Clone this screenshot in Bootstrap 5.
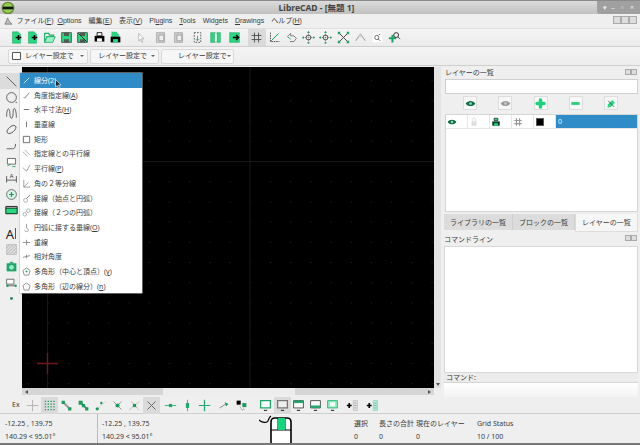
<!DOCTYPE html>
<html lang="ja">
<head>
<meta charset="UTF-8">
<title>LibreCAD</title>
<link href="https://cdn.jsdelivr.net/npm/bootstrap@5.3.0/dist/css/bootstrap.min.css" rel="stylesheet">
<style>
html, body { height: 445px; overflow: hidden; }
body { font-family: "Noto Sans", "Noto Sans CJK JP", sans-serif; font-size: 7px; line-height: 10px; color: #3a3a3a; background: #efefef; }
svg { display: block; }
.sprite { position: absolute; }
.app { height: 445px; position: relative; border-bottom: 2px solid #777; }

.titlebar { height: 14px; flex: none; background: linear-gradient(#dcdcdc, #c0c0c0); border-top: 1px solid #8a8a8a; position: relative; }
.title-text { font-weight: 700; font-size: 8.5px; color: #444; margin-right: 7px; }
.app-icon { position: absolute; left: 1px; top: 0; }
.win-btns { position: absolute; right: 0; top: 0; width: 43px; height: 13px; background: #a0a0a0; border-bottom-left-radius: 3px; color: #eee; font-size: 7px; }

.menubar { height: 14px; flex: none; padding-left: 3.5px; background: #efefef; position: relative; font-family: "Liberation Sans", "Noto Sans CJK JP", sans-serif; }
.menubar span { margin-right: 7px; font-size: 7px; white-space: nowrap; }
.menubar span.menu-first { margin-right: 4px; }
.menubar u { text-decoration: underline; }
.mdi-btns { position: absolute; right: 3px; top: 2px; }
.mini { width: 8px; height: 8px; border: 1px solid #aaa; background: #ddd; }

.toolbar { flex: none; height: 19px; padding-left: 8px; background: linear-gradient(#f4f4f4, #ececec); border-top: 1px solid #e0e0e0; border-bottom: 1px solid #cfcfcf; }
.slot { flex: none; height: 17px; }
.w1 { width: 16.6px; }
.w2 { width: 18.6px; }
.w3 { width: 17.25px; }
.sep { flex: none; width: 8px; }
.sep-s { flex: none; width: 4.6px; }
.pressed { background: #dadada; border-radius: 1px; }
.combo-row { height: 19px; padding-left: 8px; gap: 2px; border-top: 0; }
.combo { height: 15px; background: #f6f6f6; border: 1px solid #d9d9d9; border-radius: 2px; font-size: 7px; white-space: nowrap; padding: 0 3px; }
.combo-1 { width: 80px; }
.combo-2 { width: 69px; }
.combo-3 { width: 73px; }
.caret-d { margin-left: auto; width: 0; height: 0; border: 2px solid transparent; border-top: 2px solid #666; margin-top: 2px; }

.workspace { flex: 1 1 auto; min-height: 0; padding-top: 1px; }
.left-tools { flex: none; width: 22px; padding-top: 6px; background: #efefef; }
.tool { height: 16.2px; flex: none; }
.tool.on { background: #dcdcdc; }
.tool-gap { height: 7px; flex: none; }
.tool-text { font-size: 13px; color: #222; }
.text-bar { width: 1px; height: 11px; background: #555; margin-left: 1px; }

.center { flex: none; width: 421px; padding-right: 2px; }
.canvas-row { flex: 1 1 auto; min-height: 0; }
.canvas { flex: 1 1 auto; background: #000; }
.vscroll { flex: none; width: 7px; background: #e4e4e4; position: relative; }
.arrow-d { position: absolute; left: 2px; bottom: 2px; width: 0; height: 0; border: 2px solid transparent; border-top: 3px solid #555; border-bottom: 0; }
.hscroll { flex: none; height: 7px; background: #d6d6d6; padding-left: 141px; margin: 0 7px 2px 0; position: relative; }
.arrow-l, .arrow-r { position: absolute; top: 2px; width: 0; height: 0; border: 2px solid transparent; }
.arrow-l { left: 3px; border-right: 3px solid #555; border-left: 0; }
.arrow-r { right: 3px; border-left: 3px solid #555; border-right: 0; }
.thumb { width: 132px; height: 100%; background: #ededed; }

.dock { flex: none; width: 197px; padding-right: 2px; }
.dock-title { height: 12px; flex: none; padding: 1px 0 0 2px; font-size: 7px; position: relative; }
.dock-btns { position: absolute; right: 1px; top: 2px; }
.dock-btns .mini { width: 6px; height: 6px; }
.layer-filter { height: 15px; flex: none; background: #fff; border: 1px solid #cfcfcf; margin-left: 2px; }
.layer-actions { height: 20px; flex: none; margin-left: 2px; padding: 2px 20px 0 18px; }
.act { width: 14px; height: 14px; background: #f7f7f7; border: 1px solid #ddd; }
.layer-table { height: 98px; flex: none; background: #fff; border: 1px solid #d4d4d4; margin-left: 2px; }
.layer-row { height: 14px; border-bottom: 1px solid #e6e6e6; }
.cell { width: 22px; border-right: 1px solid #e6e6e6; flex: none; padding-left: 1px; }
.cell-name { flex: 1 1 auto; background: #308cc6; color: #e8f2fa; padding-left: 2px; line-height: 13px; }
.swatch { width: 8px; height: 8px; background: #000; border: 1px solid #555; margin-left: 1px; }
.dock-tabs { height: 19px; flex: none; margin: 2px 27px 0 1px; }
.dock-tab { background: #dcdcdc; padding: 4px 6px 0; border-right: 1px solid #cfcfcf; white-space: nowrap; flex: none; height: 16px; }
.dock-tab.active { background: #f6f6f6; height: 18px; border: 1px solid #ddd; border-top: 0; }
.cmd-title { height: 13px; flex: none; padding: 2px 0 0 1px; position: relative; }
.cmd-output { flex: 1 1 auto; background: #fff; border: 1px solid #d8d8d8; margin-left: 1px; }
.cmd-label { height: 10px; flex: none; padding-left: 3px; font-size: 7px; background: #ececec; line-height: 10px; border-bottom: 1px solid #d4d4d4; }
.cmd-input { height: 14px; flex: none; background: linear-gradient(#fff, #f3f3f3); margin-left: 1px; }

.bottom-tools { height: 17px; flex: none; padding-left: 12px; border-bottom: 1px solid #cfcfcf; background: #efefef; font-size: 7px; }
.ex { width: 11.5px; flex: none; }
.b1 { width: 17px; }
.b2 { width: 16.6px; }
.bsep-2 { width: 2px; flex: none; }
.bsep-3 { width: 3px; flex: none; }
.bsep-4 { width: 4px; flex: none; }
.bsep-8 { width: 8px; flex: none; }

.status { height: 29px; flex: none; background: #efefef; position: relative; }
.st-col { flex: none; padding-top: 3px; white-space: nowrap; }
.st-col div { height: 13px; line-height: 13px; }
.st-a { width: 98px; padding-left: 5px; border-right: 1px solid #bbb; }
.st-b { width: 161px; padding-left: 4px; }
.st-mouse { width: 95px; position: relative; }
.st-c { width: 25px; }
.st-d { width: 37px; }
.st-e { width: 61px; }
.menu-pop { position: absolute; left: 20px; top: 73px; width: 122px; background: #fff; z-index: 5; box-shadow: 0 0 0 .5px #bbb, 1px 1px 1px rgba(0,0,0,.3); }
.pop-item { height: 14.7px; padding-left: 14px; line-height: 15px; white-space: nowrap; position: relative; }
.pop-item svg { position: absolute; left: 2px; top: 3px; }
.pop-item.on { background: #308cc6; color: #fff; }
.cursor { position: absolute; left: 55px; top: 79px; z-index: 6; }
</style>
</head>
<body>

<svg class="sprite" width="0" height="0">
  <defs>
    <symbol id="new" viewBox="0 0 16 16"><path d="M3 1h7l3 3v11H3z" fill="#27d880" stroke="#1a9c5c" stroke-width=".6"/><path d="M7 8h7M10.5 5v6" stroke="#000" stroke-width="2"/></symbol>
    <symbol id="open" viewBox="0 0 16 16"><path d="M2 3h5l1 2h5v2H5l-3 7z" fill="none" stroke="#18b066" stroke-width="1.4"/><path d="M5 7h10l-3 7H2z" fill="#9eeec6" stroke="#18b066"/></symbol>
    <symbol id="save" viewBox="0 0 16 16"><path d="M2 2h12v12H2z" fill="#27d880" stroke="#444"/><path d="M5 2h6v4H5zM5 10h6v4H5z" fill="#555"/></symbol>
    <symbol id="saveas" viewBox="0 0 16 16"><path d="M2 2h12v12H2z" fill="#27d880" stroke="#444"/><path d="M5 2h6v4H5zM5 10h6v4H5z" fill="#555"/><path d="M3 3l10 10" stroke="#222" stroke-width="1.2"/></symbol>
    <symbol id="print" viewBox="0 0 16 16"><path d="M5 2h6v4H5z" fill="#fff" stroke="#000"/><path d="M2 6h12v7H2z" fill="#000"/><path d="M5 9h6v4H5z" fill="#fff"/></symbol>
    <symbol id="preview" viewBox="0 0 16 16"><path d="M3 1h6l3 3v4H3z" fill="#27d880"/><path d="M2 7h12v7H2z" fill="#000"/><path d="M5 10h6v4H5z" fill="#27d880"/></symbol>
    <symbol id="pointer" viewBox="0 0 16 16"><path d="M5 2l7 7H8.500l2 4-1.500.7-2-4L5 12z" fill="#fff" stroke="#999" stroke-width=".8"/></symbol>
    <symbol id="copy" viewBox="0 0 16 16"><path d="M3 2h10v12H3z" fill="#ccc" stroke="#aaa"/><path d="M6 5h6v7H6z" fill="#eee" stroke="#999"/></symbol>
    <symbol id="dash" viewBox="0 0 16 16"><path d="M4 2h8v12H4z" fill="none" stroke="#444" stroke-dasharray="2 1.500"/><path d="M8 6v6M6 10l2 2 2-2" stroke="#1a9c5c" fill="none"/></symbol>
    <symbol id="split" viewBox="0 0 16 16"><path d="M2 2h5v12H2z" fill="#27d880" stroke="#1a9c5c" stroke-width=".6"/><path d="M10 2h4v12h-4z" fill="#27d880" stroke="#1a9c5c" stroke-width=".6"/><path d="M7 2l3 1v10l-3 1z" fill="#fff" stroke="#1a9c5c" stroke-width=".6"/></symbol>
    <symbol id="paste" viewBox="0 0 16 16"><path d="M2 2h12v12H2z" fill="#27d880" stroke="#1a9c5c" stroke-width=".6"/><path d="M6 8h7M10 5l3 3-3 3" stroke="#000" stroke-width="1.800" fill="none"/></symbol>
    <symbol id="grid" viewBox="0 0 16 16"><path d="M5.500 2v12M10.500 2v12M2 5.500h12M2 10.500h12" stroke="#555" stroke-width="1.200"/></symbol>
    <symbol id="draft" viewBox="0 0 16 16"><path d="M3 2v11h11" stroke="#333" stroke-dasharray="2 1" fill="none"/><path d="M4 12l9-9" stroke="#1a9c5c" stroke-width="1.200"/></symbol>
    <symbol id="zoomback" viewBox="0 0 16 16"><path d="M3 7l4-4v3h4l3 3-3 4H6" stroke="#666" fill="none"/><path d="M3 7l4 3" stroke="#1a9c5c"/></symbol>
    <symbol id="pan" viewBox="0 0 16 16"><path d="M8 1v14M1 8h14" stroke="#777" stroke-dasharray="2 1"/><circle cx="8" cy="8" r="3" fill="none" stroke="#333"/><path d="M6 2h4L8 0zM6 14h4l-2 2zM2 6v4L0 8zM14 6v4l2-2z" fill="#1a9c5c"/></symbol>
    <symbol id="zoomext" viewBox="0 0 16 16"><path d="M3 3l10 10M13 3L3 13" stroke="#444" stroke-width="1.200"/><path d="M1 1h3v3H1zM12 1h3v3h-3zM1 12h3v3H1zM12 12h3v3h-3z" fill="#2a9e6a"/></symbol>
    <symbol id="zoomgray" viewBox="0 0 16 16"><path d="M2 12L8 4l6 8" fill="none" stroke="#aaa" stroke-width="1.400"/><circle cx="8" cy="5" r="2" fill="#ccc"/></symbol>
    <symbol id="zoomwin" viewBox="0 0 16 16"><path d="M1 1h14v14H1z" fill="#fff"/><circle cx="7" cy="8" r="3" fill="none" stroke="#555" stroke-width="1.200"/><path d="M9 10l3 3M10 4l2-1" stroke="#333"/></symbol>
    <symbol id="zoomplus" viewBox="0 0 16 16"><path d="M1 9h9M5.500 5v9" stroke="#1da86b" stroke-width="2.600"/><circle cx="10" cy="5" r="3" fill="none" stroke="#333" stroke-width="1.200"/><path d="M12 7l3 3" stroke="#333"/></symbol>

    <symbol id="t-line" viewBox="0 0 16 16"><path d="M2 2l12 12" stroke="#555" stroke-width="1.100"/></symbol>
    <symbol id="t-circle" viewBox="0 0 16 16"><circle cx="8" cy="8" r="6" fill="none" stroke="#555" stroke-width="1.100"/><path d="M13 14h2" stroke="#555"/></symbol>
    <symbol id="t-spline" viewBox="0 0 16 16"><path d="M2 12c0-12 4-12 4-4s4 8 4-1 4-6 4 6" fill="none" stroke="#555" stroke-width="1.100"/></symbol>
    <symbol id="t-ellipse" viewBox="0 0 16 16"><ellipse cx="8" cy="8" rx="6.500" ry="3.500" transform="rotate(-40 8 8)" fill="none" stroke="#555" stroke-width="1.100"/></symbol>
    <symbol id="t-poly" viewBox="0 0 16 16"><path d="M2 12h7c3 0 4-2 4-6" fill="none" stroke="#555" stroke-width="1.100"/></symbol>
    <symbol id="t-select" viewBox="0 0 16 16"><path d="M3 3h10v7H3z" fill="#fff" stroke="#555"/><path d="M3 12l4-2M13 13h-4" stroke="#1a9c5c"/></symbol>
    <symbol id="t-dim" viewBox="0 0 16 16"><path d="M2 5v8M14 5v8M2 10h12" stroke="#444"/><text x="8" y="7" font-size="7" text-anchor="middle" fill="#333">A</text></symbol>
    <symbol id="t-mod" viewBox="0 0 16 16"><circle cx="8" cy="8" r="6" fill="#d9f7e8" stroke="#555"/><path d="M5 8h6M8 5v6" stroke="#1a9c5c" stroke-width="1.500"/></symbol>
    <symbol id="t-measure" viewBox="0 0 16 16"><path d="M1 5h14v7H1z" fill="#27d880" stroke="#000"/><path d="M1 3v2M15 3v2M1 3h14" stroke="#000"/></symbol>
    <symbol id="t-hatch" viewBox="0 0 16 16"><path d="M2 2h12v12H2z" fill="#ddd" stroke="#bbb"/><path d="M2 6l4-4M2 10l8-8M2 14L14 2M6 14l8-8M10 14l4-4" stroke="#aaa" stroke-width=".8"/></symbol>
    <symbol id="t-image" viewBox="0 0 16 16"><path d="M2 4h12v10H2z" fill="#1fa56a"/><path d="M5 4l2-2h2l2 2" fill="#1fa56a"/><circle cx="8" cy="9" r="3" fill="#8ff0c0"/></symbol>
    <symbol id="t-block" viewBox="0 0 16 16"><path d="M2 4h9v6H2z" fill="#fff" stroke="#555"/><path d="M2 12h11" stroke="#555"/><circle cx="3" cy="12" r="1.500" fill="#1a9c5c"/><circle cx="13" cy="12" r="1.500" fill="#1a9c5c"/></symbol>
    <symbol id="t-dot" viewBox="0 0 16 16"><circle cx="8" cy="8" r="1.800" fill="#2a8a5e"/></symbol>

    <symbol id="m-line" viewBox="0 0 10 10"><path d="M2 8l6-6" stroke="#e8f2fa"/></symbol>
    <symbol id="m-angle" viewBox="0 0 10 10"><path d="M2 7l1 1 5-6" fill="none" stroke="#777"/></symbol>
    <symbol id="m-h" viewBox="0 0 10 10"><path d="M2 5h6" stroke="#666"/></symbol>
    <symbol id="m-v" viewBox="0 0 10 10"><path d="M5 2v6" stroke="#666"/></symbol>
    <symbol id="m-rect" viewBox="0 0 10 10"><path d="M1.500 1.500h7v7h-7z" fill="none" stroke="#666"/></symbol>
    <symbol id="m-par" viewBox="0 0 10 10"><path d="M1 3l5 5M3 1l6 6" stroke="#aaa"/></symbol>
    <symbol id="m-par2" viewBox="0 0 10 10"><path d="M1 4l4 4 4-7" fill="none" stroke="#999"/></symbol>
    <symbol id="m-bis" viewBox="0 0 10 10"><path d="M2 1v8h7M2 9l5-5" fill="none" stroke="#999"/></symbol>
    <symbol id="m-tan" viewBox="0 0 10 10"><circle cx="4" cy="7" r="2.200" fill="none" stroke="#aaa"/><path d="M5 5l4-4" stroke="#777"/></symbol>
    <symbol id="m-tan2" viewBox="0 0 10 10"><circle cx="3" cy="7" r="2" fill="none" stroke="#aaa"/><circle cx="7" cy="3" r="2" fill="none" stroke="#aaa"/></symbol>
    <symbol id="m-ortho" viewBox="0 0 10 10"><path d="M3 8a2 2 0 1 0 3-2M5 1v5" fill="none" stroke="#999"/></symbol>
    <symbol id="m-cross" viewBox="0 0 10 10"><path d="M1 5h8M5 2v6" stroke="#888"/></symbol>
    <symbol id="m-rel" viewBox="0 0 10 10"><path d="M1 6l8-2M5 3v4" stroke="#888"/></symbol>
    <symbol id="m-polyc" viewBox="0 0 10 10"><path d="M5 1l4 3-1.500 5h-5L1 4z" fill="none" stroke="#888"/><circle cx="5" cy="5" r="1" fill="#1a9c5c"/></symbol>
    <symbol id="m-polys" viewBox="0 0 10 10"><path d="M5 1l4 3-1.500 5h-5L1 4z" fill="none" stroke="#888"/></symbol>

    <symbol id="eye" viewBox="0 0 16 16"><path d="M1 8c3-5 11-5 14 0-3 5-11 5-14 0z" fill="#0d6e47"/><circle cx="8" cy="8" r="2" fill="#89dcb4"/></symbol>
    <symbol id="eye-g" viewBox="0 0 16 16"><path d="M1 8c3-5 11-5 14 0-3 5-11 5-14 0z" fill="#999"/><circle cx="8" cy="8" r="2" fill="#ccc"/></symbol>
    <symbol id="plus" viewBox="0 0 16 16"><path d="M8 3v10M3 8h10" stroke="#18d37a" stroke-width="5" stroke-linecap="round"/></symbol>
    <symbol id="minus" viewBox="0 0 16 16"><path d="M2 8h12" stroke="#18d37a" stroke-width="4"/></symbol>
    <symbol id="edit" viewBox="0 0 16 16"><path d="M2 14l1-5 6-6 4 4-6 6z" fill="#27d880"/><path d="M3 4l9 9" stroke="#333"/></symbol>
    <symbol id="lock-g" viewBox="0 0 16 16"><path d="M4 7h8v7H4z" fill="#ddd"/><path d="M5.500 7V4a2.500 2.500 0 0 1 5 0v3" fill="none" stroke="#ddd" stroke-width="1.500"/></symbol>
    <symbol id="printer-g" viewBox="0 0 16 16"><path d="M5 2h6v4H5z" fill="#27d880" stroke="#000"/><path d="M2 7h12v7H2z" fill="#0b3d28"/><path d="M5 10h6v4H5z" fill="#27d880"/></symbol>
    <symbol id="hash" viewBox="0 0 16 16"><path d="M5.500 2v12M10.500 2v12M2 5.500h12M2 10.500h12" stroke="#999" stroke-width="1.800"/></symbol>

    <symbol id="s-free" viewBox="0 0 16 16"><path d="M8 1v14M1 8h14" stroke="#aaa"/></symbol>
    <symbol id="s-grid" viewBox="0 0 16 16"><path d="M3 2v12M6.500 2v12M10 2v12M13.500 2v12" stroke="#1a9c5c" stroke-width="1.600" stroke-dasharray="1.600 1.800"/></symbol>
    <symbol id="s-a" viewBox="0 0 16 16"><path d="M3 3l10 10" stroke="#999" stroke-width="2.500"/><path d="M2 2h4v4H2zM10 10h4v4h-4z" fill="#1a9c5c"/></symbol>
    <symbol id="s-b" viewBox="0 0 16 16"><path d="M3 3l10 10" stroke="#777" stroke-width="2"/><path d="M2 2h5v5H2zM6 6h4v4H6zM10 10h4v4h-4z" fill="#1a9c5c"/></symbol>
    <symbol id="s-c" viewBox="0 0 16 16"><path d="M3 14L14 3" stroke="#bbb" stroke-dasharray="2 1.500"/><circle cx="4" cy="12" r="2" fill="#1a9c5c"/><circle cx="9" cy="5" r="1.500" fill="#1a9c5c"/></symbol>
    <symbol id="s-d" viewBox="0 0 16 16"><path d="M3 3l10 10M13 3L6 10" stroke="#888"/><circle cx="8" cy="8" r="2.500" fill="#1a9c5c"/></symbol>
    <symbol id="s-e" viewBox="0 0 16 16"><path d="M2 13L14 3M4 3l9 10" stroke="#999" stroke-dasharray="2 1"/><path d="M6 6h4v4H6z" fill="#1a9c5c"/></symbol>
    <symbol id="s-x" viewBox="0 0 16 16"><path d="M3 3l10 10M13 3L3 13" stroke="#666" stroke-width="1.200"/></symbol>
    <symbol id="r-h" viewBox="0 0 16 16"><path d="M1 8h14" stroke="#1da86b"/><path d="M6 6h4v4H6z" fill="#1da86b"/></symbol>
    <symbol id="r-v" viewBox="0 0 16 16"><path d="M8 1v14" stroke="#1da86b"/><path d="M6 5h4v6H6z" fill="#1da86b"/></symbol>
    <symbol id="r-p" viewBox="0 0 16 16"><path d="M8 1v14M1 8h14" stroke="#1da86b" stroke-width="1.500"/></symbol>
    <symbol id="rel" viewBox="0 0 16 16"><path d="M2 11l8-5" stroke="#888" stroke-width="1.200"/><path d="M8 4l5 2-3 3z" fill="#1a9c5c"/></symbol>
    <symbol id="relz" viewBox="0 0 16 16"><path d="M2 2h5v5H2z" fill="#000"/><path d="M9 5h5v5H9z" fill="#1a9c5c"/><path d="M6 9l3 5 1-2 2 1" fill="#fff" stroke="#666" stroke-width=".6"/></symbol>
    <symbol id="mon" viewBox="0 0 16 16"><path d="M2 2h12v9H2z" fill="#fff" stroke="#1da86b" stroke-width="1.600"/><path d="M6 14h4" stroke="#333" stroke-width="1.400"/></symbol>
    <symbol id="mon-g" viewBox="0 0 16 16"><path d="M2 2h12v9H2z" fill="#eee" stroke="#777" stroke-width="1.600"/><path d="M6 14h4" stroke="#333" stroke-width="1.400"/></symbol>
    <symbol id="mon-t" viewBox="0 0 16 16"><path d="M2 2h12v9H2z" fill="#fff" stroke="#333"/><path d="M2 2h12v3H2z" fill="#1da86b"/><path d="M6 14h4" stroke="#333" stroke-width="1.400"/></symbol>
    <symbol id="mon-b" viewBox="0 0 16 16"><path d="M2 2h12v9H2z" fill="#fff" stroke="#333"/><path d="M2 8h12v3H2z" fill="#1da86b"/><path d="M6 14h4" stroke="#333" stroke-width="1.400"/></symbol>
    <symbol id="mon-c" viewBox="0 0 16 16"><path d="M2 2h12v9H2z" fill="#8ff0c0" stroke="#1da86b"/><path d="M5 4h6v5H5z" fill="#fff"/><path d="M6 14h4" stroke="#333" stroke-width="1.400"/></symbol>
    <symbol id="layer-a" viewBox="0 0 16 16"><path d="M1 8h6M4 5v6" stroke="#000" stroke-width="2"/><path d="M9 2h5v12H9z" fill="#e8e8e8" stroke="#bbb"/><path d="M10 5h3M10 8h3M10 11h3" stroke="#999"/></symbol>
    <symbol id="layer-b" viewBox="0 0 16 16"><path d="M1 8h6M4 5v6" stroke="#000" stroke-width="2"/><path d="M9 2h5v12H9z" fill="#bff3d8" stroke="#8cc"/><path d="M10 5h3M10 8h3M10 11h3" stroke="#4a9"/></symbol>
  </defs>
</svg>

<div class="app d-flex flex-column">

  <header class="titlebar d-flex align-items-center justify-content-center">
    <svg class="app-icon" width="14" height="14" viewBox="0 0 16 16"><circle cx="8" cy="8" r="6.500" fill="#8fd14f" stroke="#6d7f3a" stroke-width="1.500"/><path d="M2 8h12" stroke="#111" stroke-width="3"/></svg>
    <span class="title-text">LibreCAD - [無題 1]</span>
    <div class="win-btns d-flex align-items-center justify-content-around px-1"><span>▾</span><span>–</span><span>▫</span><span>×</span></div>
  </header>

  <nav class="menubar d-flex align-items-center">
    <svg width="9" height="9" viewBox="0 0 10 10" class="me-1"><path d="M1 8l3-7 2 4 3 3z" fill="#bbb" stroke="#555" stroke-width=".6"/></svg>
    <span class="menu-first">ファイル(<u>F</u>)</span><span><u>O</u>ptions</span><span>編集(<u>E</u>)</span><span>表示(<u>V</u>)</span><span>Pl<u>u</u>gins</span><span><u>T</u>ools</span><span>Widgets</span><span><u>D</u>rawings</span><span>ヘルプ(<u>H</u>)</span>
    <div class="mdi-btns d-flex gap-0"><div class="mini"></div><div class="mini"></div><div class="mini"></div></div>
  </nav>

  <div class="toolbar d-flex align-items-center">
    <div class="slot w1 d-flex align-items-center justify-content-center"><svg width="13" height="13"><use href="#new"/></svg></div>
    <div class="slot w1 d-flex align-items-center justify-content-center"><svg width="13" height="13"><use href="#new"/></svg></div>
    <div class="slot w1 d-flex align-items-center justify-content-center"><svg width="13" height="13"><use href="#open"/></svg></div>
    <div class="slot w1 d-flex align-items-center justify-content-center"><svg width="13" height="13"><use href="#save"/></svg></div>
    <div class="slot w1 d-flex align-items-center justify-content-center"><svg width="13" height="13"><use href="#saveas"/></svg></div>
    <div class="slot w1 d-flex align-items-center justify-content-center"><svg width="13" height="13"><use href="#print"/></svg></div>
    <div class="slot w1 d-flex align-items-center justify-content-center"><svg width="13" height="13"><use href="#preview"/></svg></div>
    <div class="sep"></div>
    <div class="slot w2 d-flex align-items-center justify-content-center"><svg width="12" height="12"><use href="#pointer"/></svg></div>
    <div class="slot w2 d-flex align-items-center justify-content-center"><svg width="13" height="13"><use href="#copy"/></svg></div>
    <div class="slot w2 d-flex align-items-center justify-content-center"><svg width="13" height="13"><use href="#copy"/></svg></div>
    <div class="slot w2 d-flex align-items-center justify-content-center"><svg width="13" height="13"><use href="#dash"/></svg></div>
    <div class="slot w2 d-flex align-items-center justify-content-center"><svg width="13" height="13"><use href="#split"/></svg></div>
    <div class="slot w2 d-flex align-items-center justify-content-center"><svg width="13" height="13"><use href="#paste"/></svg></div>
    <div class="sep-s"></div>
    <div class="slot w3 pressed d-flex align-items-center justify-content-center"><svg width="13" height="13"><use href="#grid"/></svg></div>
    <div class="slot w3 d-flex align-items-center justify-content-center"><svg width="13" height="13"><use href="#draft"/></svg></div>
    <div class="slot w3 d-flex align-items-center justify-content-center"><svg width="13" height="13"><use href="#zoomback"/></svg></div>
    <div class="slot w3 d-flex align-items-center justify-content-center"><svg width="13" height="13"><use href="#pan"/></svg></div>
    <div class="slot w3 d-flex align-items-center justify-content-center"><svg width="13" height="13"><use href="#pan"/></svg></div>
    <div class="slot w3 d-flex align-items-center justify-content-center"><svg width="13" height="13"><use href="#zoomext"/></svg></div>
    <div class="slot w3 d-flex align-items-center justify-content-center"><svg width="13" height="13"><use href="#zoomgray"/></svg></div>
    <div class="slot w3 d-flex align-items-center justify-content-center"><svg width="11" height="11"><use href="#zoomwin"/></svg></div>
    <div class="slot w3 d-flex align-items-center justify-content-center"><svg width="13" height="13"><use href="#zoomplus"/></svg></div>
  </div>

  <div class="toolbar combo-row d-flex align-items-center">
    <div class="combo combo-1 d-flex align-items-center gap-1"><svg width="9" height="8" viewBox="0 0 9 8"><path d="M.5.5h8v7h-8z" fill="#fff" stroke="#555"/></svg><span>レイヤー設定で</span><i class="caret-d"></i></div>
    <div class="combo combo-2 d-flex align-items-center gap-1"><svg width="8" height="8" viewBox="0 0 8 8"><path d="M0 4h8" stroke="#888"/></svg><span>レイヤー設定で</span><i class="caret-d"></i></div>
    <div class="combo combo-3 d-flex align-items-center ps-3"><span>レイヤー設定で</span><i class="caret-d"></i></div>
  </div>

  <div class="workspace d-flex">
    <aside class="left-tools d-flex flex-column align-items-center">
      <div class="tool on w-100 d-flex align-items-center justify-content-center"><svg width="13" height="13"><use href="#t-line"/></svg></div>
      <div class="tool d-flex align-items-center"><svg width="13" height="13"><use href="#t-circle"/></svg></div>
      <div class="tool d-flex align-items-center"><svg width="13" height="13"><use href="#t-spline"/></svg></div>
      <div class="tool d-flex align-items-center"><svg width="13" height="13"><use href="#t-ellipse"/></svg></div>
      <div class="tool d-flex align-items-center"><svg width="13" height="13"><use href="#t-poly"/></svg></div>
      <div class="tool d-flex align-items-center"><svg width="13" height="13"><use href="#t-select"/></svg></div>
      <div class="tool d-flex align-items-center"><svg width="13" height="13"><use href="#t-dim"/></svg></div>
      <div class="tool d-flex align-items-center"><svg width="13" height="13"><use href="#t-mod"/></svg></div>
      <div class="tool d-flex align-items-center"><svg width="13" height="13"><use href="#t-measure"/></svg></div>
      <div class="tool-gap"></div>
      <div class="tool tool-text d-flex align-items-center">A<span class="text-bar"></span></div>
      <div class="tool d-flex align-items-center"><svg width="13" height="13"><use href="#t-hatch"/></svg></div>
      <div class="tool d-flex align-items-center"><svg width="13" height="13"><use href="#t-image"/></svg></div>
      <div class="tool d-flex align-items-center"><svg width="13" height="13"><use href="#t-block"/></svg></div>
      <div class="tool d-flex align-items-center"><svg width="13" height="13"><use href="#t-dot"/></svg></div>
    </aside>

    <div class="center d-flex flex-column">
      <div class="canvas-row d-flex">
        <div class="canvas">
          <svg width="100%" height="100%">
            <defs>
              <pattern id="dots" x="5.600" y="13.200" width="20.200" height="20.200" patternUnits="userSpaceOnUse"><rect x="0" y="0" width="1" height="1" fill="#282828"/></pattern>
            </defs>
            <rect width="100%" height="100%" fill="url(#dots)"/>
            <path d="M25.500 0v322M228 0v322M0 94.500h412" stroke="#181818"/>
            <path d="M15 296.500h21M25.500 286v21" stroke="#6e1a1a" stroke-width="1.400"/>
          </svg>
        </div>
        <div class="vscroll"><i class="arrow-d"></i></div>
      </div>
      <div class="hscroll"><i class="arrow-l"></i><div class="thumb"></div><i class="arrow-r"></i></div>
    </div>

    <aside class="dock d-flex flex-column">
      <div class="dock-title">レイヤーの一覧<div class="dock-btns d-flex"><div class="mini"></div><div class="mini"></div></div></div>
      <div class="layer-filter"></div>
      <div class="layer-actions d-flex justify-content-between">
        <div class="act d-flex align-items-center justify-content-center"><svg width="11" height="11"><use href="#eye"/></svg></div>
        <div class="act d-flex align-items-center justify-content-center"><svg width="11" height="11"><use href="#eye-g"/></svg></div>
        <div class="act d-flex align-items-center justify-content-center"><svg width="11" height="11"><use href="#plus"/></svg></div>
        <div class="act d-flex align-items-center justify-content-center"><svg width="11" height="11"><use href="#minus"/></svg></div>
        <div class="act d-flex align-items-center justify-content-center"><svg width="11" height="11"><use href="#edit"/></svg></div>
      </div>
      <div class="layer-table">
        <div class="layer-row d-flex">
          <div class="cell d-flex align-items-center"><svg width="10" height="10"><use href="#eye"/></svg></div>
          <div class="cell d-flex align-items-center"><svg width="10" height="10"><use href="#lock-g"/></svg></div>
          <div class="cell d-flex align-items-center"><svg width="10" height="10"><use href="#printer-g"/></svg></div>
          <div class="cell d-flex align-items-center"><svg width="10" height="10"><use href="#hash"/></svg></div>
          <div class="cell d-flex align-items-center"><div class="swatch"></div></div>
          <div class="cell-name">0</div>
        </div>
      </div>
      <div class="dock-tabs d-flex align-items-start">
        <div class="dock-tab">ライブラリの一覧</div>
        <div class="dock-tab">ブロックの一覧</div>
        <div class="dock-tab active">レイヤーの一覧</div>
      </div>
      <div class="cmd-title">コマンドライン<div class="dock-btns d-flex"><div class="mini"></div><div class="mini"></div></div></div>
      <div class="cmd-output"></div>
      <div class="cmd-label">コマンド:</div>
      <div class="cmd-input"></div>
    </aside>
  </div>

  <div class="bottom-tools d-flex align-items-center">
    <div class="ex">Ex</div>
    <div class="slot b1 d-flex align-items-center justify-content-center"><svg width="13" height="13"><use href="#s-free"/></svg></div>
    <div class="slot b1 pressed d-flex align-items-center justify-content-center"><svg width="13" height="13"><use href="#s-grid"/></svg></div>
    <div class="slot b1 d-flex align-items-center justify-content-center"><svg width="13" height="13"><use href="#s-a"/></svg></div>
    <div class="slot b1 d-flex align-items-center justify-content-center"><svg width="13" height="13"><use href="#s-b"/></svg></div>
    <div class="slot b1 d-flex align-items-center justify-content-center"><svg width="13" height="13"><use href="#s-c"/></svg></div>
    <div class="slot b1 d-flex align-items-center justify-content-center"><svg width="13" height="13"><use href="#s-d"/></svg></div>
    <div class="slot b1 d-flex align-items-center justify-content-center"><svg width="13" height="13"><use href="#s-e"/></svg></div>
    <div class="slot b1 pressed d-flex align-items-center justify-content-center"><svg width="13" height="13"><use href="#s-x"/></svg></div>
    <div class="bsep-2"></div>
    <div class="slot b1 d-flex align-items-center justify-content-center"><svg width="13" height="13"><use href="#r-h"/></svg></div>
    <div class="slot b1 d-flex align-items-center justify-content-center"><svg width="13" height="13"><use href="#r-v"/></svg></div>
    <div class="slot b1 d-flex align-items-center justify-content-center"><svg width="13" height="13"><use href="#r-p"/></svg></div>
    <div class="bsep-3"></div>
    <div class="slot b1 d-flex align-items-center justify-content-center"><svg width="13" height="13"><use href="#rel"/></svg></div>
    <div class="slot b1 d-flex align-items-center justify-content-center"><svg width="13" height="13"><use href="#relz"/></svg></div>
    <div class="bsep-8"></div>
    <div class="slot b2 d-flex align-items-center justify-content-center"><svg width="13" height="13"><use href="#mon"/></svg></div>
    <div class="slot b2 pressed d-flex align-items-center justify-content-center"><svg width="13" height="13"><use href="#mon-g"/></svg></div>
    <div class="slot b2 d-flex align-items-center justify-content-center"><svg width="13" height="13"><use href="#mon-t"/></svg></div>
    <div class="slot b2 d-flex align-items-center justify-content-center"><svg width="13" height="13"><use href="#mon-b"/></svg></div>
    <div class="slot b2 d-flex align-items-center justify-content-center"><svg width="13" height="13"><use href="#mon-c"/></svg></div>
    <div class="bsep-4"></div>
    <div class="slot b2 d-flex align-items-center justify-content-center"><svg width="13" height="13"><use href="#layer-a"/></svg></div>
    <div class="bsep-3"></div>
    <div class="slot b2 d-flex align-items-center justify-content-center"><svg width="13" height="13"><use href="#layer-b"/></svg></div>
  </div>

  <footer class="status d-flex">
    <div class="st-col st-a"><div>-12.25 , 139.75</div><div>140.29 &lt; 95.01°</div></div>
    <div class="st-col st-b"><div>-12.25 , 139.75</div><div>140.29 &lt; 95.01°</div></div>
    <div class="st-mouse">
      <svg width="40" height="29" viewBox="0 0 40 29">
        <path d="M0 6c2 2 6 3 8 2 2-1 1-4 4-6" fill="none" stroke="#000" stroke-width="1.200"/>
        <path d="M12 30V8q0-4 4-4h12q4 0 4 4v22" fill="#fff" stroke="#000" stroke-width="1.600"/>
        <path d="M12 16h20M19 4v12M26 4v12" stroke="#000"/>
        <rect x="19" y="4" width="7" height="12" fill="#18d37a"/>
      </svg>
    </div>
    <div class="st-col st-c"><div>選択</div><div>0</div></div>
    <div class="st-col st-d"><div>長さの合計</div><div>0</div></div>
    <div class="st-col st-e"><div>現在のレイヤー</div><div>0</div></div>
    <div class="st-col"><div>Grid Status</div><div>10 / 100</div></div>
  </footer>

  <div class="menu-pop">
    <div class="pop-item on"><svg width="9" height="9"><use href="#m-line"/></svg>線分(2)</div>
    <div class="pop-item"><svg width="9" height="9"><use href="#m-angle"/></svg>角度指定線(<u>A</u>)</div>
    <div class="pop-item"><svg width="9" height="9"><use href="#m-h"/></svg>水平寸法(<u>H</u>)</div>
    <div class="pop-item"><svg width="9" height="9"><use href="#m-v"/></svg>垂直線</div>
    <div class="pop-item"><svg width="9" height="9"><use href="#m-rect"/></svg>矩形</div>
    <div class="pop-item"><svg width="9" height="9"><use href="#m-par"/></svg>指定線との平行線</div>
    <div class="pop-item"><svg width="9" height="9"><use href="#m-par2"/></svg>平行線(<u>P</u>)</div>
    <div class="pop-item"><svg width="9" height="9"><use href="#m-bis"/></svg>角の２等分線</div>
    <div class="pop-item"><svg width="9" height="9"><use href="#m-tan"/></svg>接線（始点と円弧）</div>
    <div class="pop-item"><svg width="9" height="9"><use href="#m-tan2"/></svg>接線（２つの円弧）</div>
    <div class="pop-item"><svg width="9" height="9"><use href="#m-ortho"/></svg>円弧に接する垂線(<u>O</u>)</div>
    <div class="pop-item"><svg width="9" height="9"><use href="#m-cross"/></svg>重線</div>
    <div class="pop-item"><svg width="9" height="9"><use href="#m-rel"/></svg>相対角度</div>
    <div class="pop-item"><svg width="9" height="9"><use href="#m-polyc"/></svg>多角形（中心と頂点）(<u>y</u>)</div>
    <div class="pop-item"><svg width="9" height="9"><use href="#m-polys"/></svg>多角形（辺の線分）(<u>n</u>)</div>
  </div>
  <svg class="cursor" width="7" height="10" viewBox="0 0 7 10"><path d="M.5.500l5.500 5.500H3.500l1.500 3-1.200.5-1.500-3L.5 8z" fill="#1c2a3a" stroke="#fff" stroke-width=".6"/></svg>
</div>

<script src="https://cdn.jsdelivr.net/npm/bootstrap@5.3.0/dist/js/bootstrap.bundle.min.js"></script>
</body>
</html>
